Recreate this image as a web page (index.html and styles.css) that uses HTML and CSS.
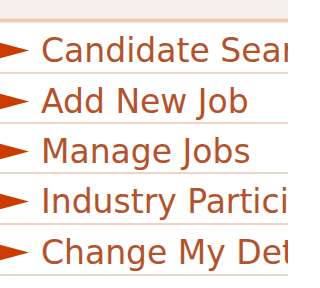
FILE: index.html
```html
<!DOCTYPE html>
<html>
<head>
<meta charset="utf-8">
<link rel="stylesheet" href="styles.css">
</head>
<body>
<div class="header"></div>
<ul class="menu">
  <li class="item"><svg class="arrow" viewBox="0 0 30 17"><polygon points="-3,0 29,8.5 -3,17"/></svg><span class="label">Candidate Search</span></li>
  <li class="item"><svg class="arrow" viewBox="0 0 30 17"><polygon points="-3,0 29,8.5 -3,17"/></svg><span class="label">Add New Job</span></li>
  <li class="item"><svg class="arrow" viewBox="0 0 30 17"><polygon points="-3,0 29,8.5 -3,17"/></svg><span class="label">Manage Jobs</span></li>
  <li class="item"><svg class="arrow" viewBox="0 0 30 17"><polygon points="-3,0 29,8.5 -3,17"/></svg><span class="label">Industry Participation</span></li>
  <li class="item"><svg class="arrow" viewBox="0 0 30 17"><polygon points="-3,0 29,8.5 -3,17"/></svg><span class="label">Change My Details</span></li>
</ul>
</body>
</html>
```

FILE: styles.css
```css
html, body {
  margin: 0;
  padding: 0;
  width: 288px;
  background: #ffffff;
  overflow: hidden;
}
.header {
  height: 18px;
  background: #f7eeef;
  border-bottom: 1px solid #f8ddd4;
}
.menu {
  list-style: none;
  margin: 0;
  padding: 0;
  width: 288px;
  overflow: hidden;
  border-top: 3px solid #f4c9ae;
}
.item {
  display: flex;
  align-items: center;
  height: 42px;
  padding-top: 6px;
  overflow: hidden;
  border-bottom: 2px solid #f3d3c4;
  white-space: nowrap;
  font-family: "DejaVu Sans", Verdana, sans-serif;
  font-size: 33px;
  color: #b4532b;
}
.item:first-child {
  height: 43px;
  border-top: 1px solid #fae4d8;
}
.item:nth-child(n+4) {
  height: 43px;
}
.arrow {
  width: 30px;
  height: 17px;
  flex: none;
  margin-right: 11px;
  fill: #cc3c00;
  filter: blur(0.5px);
}
.label {
  display: block;
  flex: none;
}
```
